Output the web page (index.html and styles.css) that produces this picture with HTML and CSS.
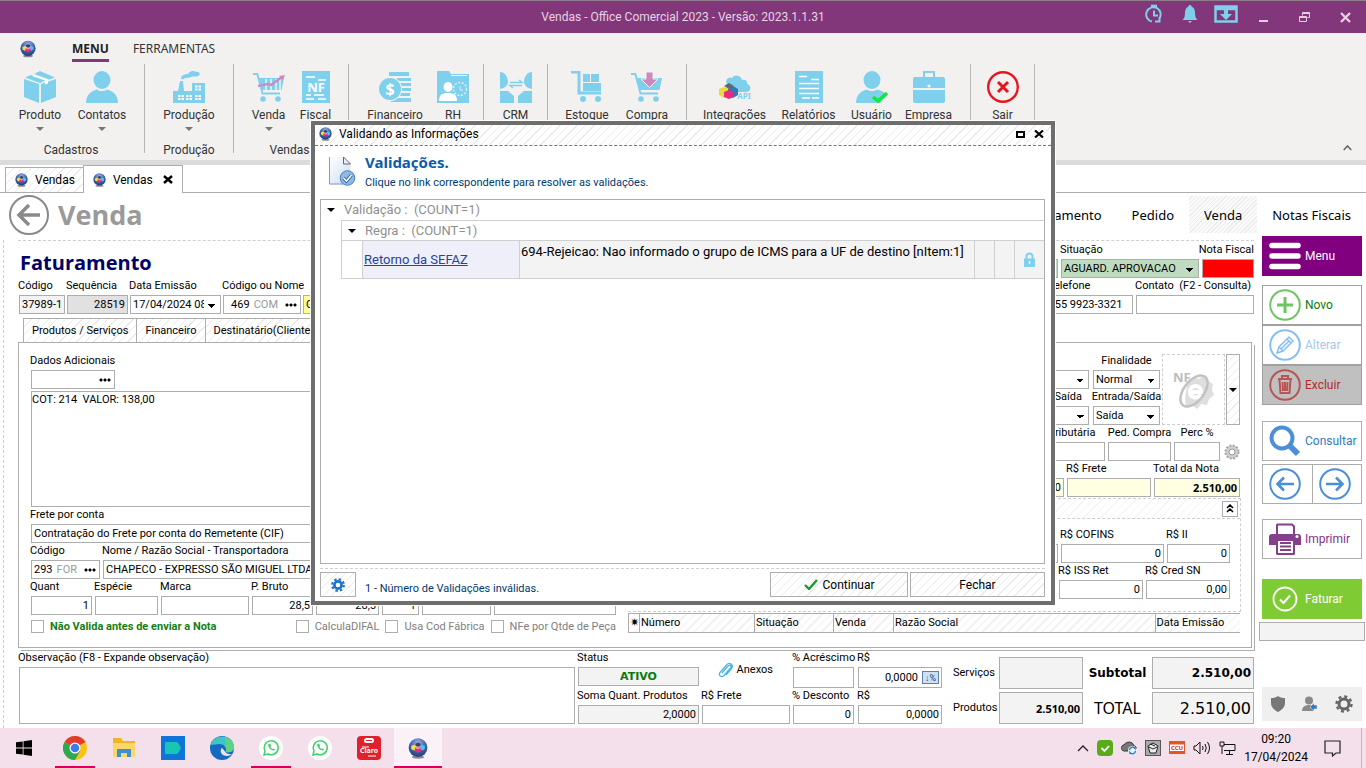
FILE: index.html
```html
<!DOCTYPE html>
<html lang="pt-BR">
<head>
<meta charset="utf-8">
<title>Vendas - Office Comercial 2023</title>
<link rel="stylesheet" href="styles.css">
</head>
<body>
<svg class="defs" aria-hidden="true">
  <defs>
    <radialGradient id="ball" cx="50%" cy="25%" r="75%"><stop offset="0" stop-color="#9db2dc"/><stop offset=".5" stop-color="#4668b0"/><stop offset="1" stop-color="#1f3f7c"/></radialGradient>
    <linearGradient id="sheet" x1="0" y1="0" x2="1" y2="1"><stop offset="0" stop-color="#fff"/><stop offset="1" stop-color="#ccdcf2"/></linearGradient>
    <symbol id="logo" viewBox="0 0 16 17"><ellipse cx="8" cy="15.500" rx="5" ry="1.300" fill="#8a8a8a"/><circle cx="8" cy="7.800" r="7.600" fill="url(#ball)"/><path d="M2.500 6.500 5 5.500 7 6.500v2.500L5 10.200 2.500 9z" fill="#f3e23c"/><path d="M9 6.500l2-1 2.500 1v2.500L11.500 10.200 9.500 9z" fill="#4fc3ea"/><path d="M6 4.600 8 3.700l2 .9v1.400L8 7 6 6z" fill="#39406a"/><path d="M5.500 8 8 6.900 10.500 8v2.800L8 12 5.500 10.800z" fill="#e8297f"/><path d="M5.500 8 8 6.900 10.500 8 8 9.200z" fill="#ff8fc0"/></symbol>
    <symbol id="cart" viewBox="0 0 32 32"><path d="M0 2h5l1.500 5H31l-2.500 12H9.500l.8 2.500H27v2H8.800L3.600 4H0z"/><circle cx="10" cy="28" r="2.800"/><circle cx="25" cy="28" r="2.800"/></symbol>
  </defs>
</svg>

<div class="app">
  <header class="titlebar">
    <h1 class="titlebar-text">Vendas - Office Comercial 2023 - Versão: 2023.1.1.31</h1>
    <div class="titlebar-tools">
      <button class="tool" aria-label="Histórico"><svg width="18" height="20" viewBox="0 0 18 20" fill="none" stroke="#7fd0ec" stroke-width="2"><path d="M7 17.500a7.200 7.200 0 1 1 7-2.500M10 17.500h4.500V13M9 6.500v5h4"/><path d="M6 2.200h6" stroke-width="3"/></svg></button>
      <button class="tool" aria-label="Notificações"><svg width="16" height="20" viewBox="0 0 16 20" fill="#7fd0ec"><path d="M8 1c1 0 1.500.6 1.500 1.500C12 3.500 13 6 13 9c0 4 1 5.500 2.500 7H.5C2 14.500 3 13 3 9c0-3 1-5.500 3.500-6.500C6.500 1.600 7 1 8 1zM6 17h4l-2 2z"/></svg></button>
      <button class="tool" aria-label="Baixar"><svg width="24" height="18" viewBox="0 0 24 18"><path d="M1.500 1.500h21v15h-21zM1 4h22" fill="none" stroke="#7fd0ec" stroke-width="2.500"/><path d="M10 4h4v5h4l-6 6-6-6h4z" fill="#7fd0ec"/></svg></button>
    </div>
    <div class="titlebar-window">
      <button class="winbtn" aria-label="Minimizar"><svg width="11" height="11" viewBox="0 0 11 11"><path d="M1 9h9" stroke="#e3cfe2" stroke-width="2"/></svg></button>
      <button class="winbtn" aria-label="Restaurar"><svg width="11" height="11" viewBox="0 0 11 11" fill="none" stroke="#e3cfe2"><path d="M3.500 3.500v-3h7v5h-2M.5 4.500h7v5h-7zM3.500 1.500h7M.5 5.500h7"/></svg></button>
      <button class="winbtn" aria-label="Fechar janela"><svg width="11" height="11" viewBox="0 0 11 11"><path d="M1 1l9 9M10 1l-9 9" stroke="#e3cfe2" stroke-width="2.400"/></svg></button>
    </div>
  </header>

  <section class="ribbon">
    <nav class="ribbon-menu">
      <svg width="16" height="18"><use href="#logo"/></svg>
      <a class="ribbon-link active" href="#menu">MENU</a>
      <a class="ribbon-link" href="#ferramentas">FERRAMENTAS</a>
    </nav>
    <div class="ribbon-groups">
      <div class="group g-cad">
        <div class="items">
          <button class="item w62 drop"><svg width="32" height="32" viewBox="0 0 32 32" fill="#7fd0ec"><path d="M0 8l15 5v19L0 26zM17 13l15-5v18l-15 6zM1 6.500l6-2.500 15 5-6 3zM10 3l6-3 15 6.500-6 2z"/><path d="M8 5l13 4.500v4l3-1V8.500L11 4z" fill="#fff"/></svg>Produto</button>
          <button class="item w62 drop"><svg width="32" height="32" viewBox="0 0 32 32" fill="#7fd0ec"><ellipse cx="16" cy="9" rx="8.500" ry="9"/><path d="M0 32c0-8 5-12 11-13.500 3 2 7 2 10 0C27 20 32 24 32 32z"/></svg>Contatos</button>
        </div>
        <span class="caption">Cadastros</span>
      </div>
      <div class="group g-prod">
        <div class="items"><button class="item w62 drop"><svg width="32" height="32" viewBox="0 0 32 32" fill="#7fd0ec"><path d="M0 20h5l2-10h3l1 10h8v-8h13v20H0zM8 8c0-4 4-5 7-5 2-3 5-4 8-2 3-1 5 2 3 3.500-3 2-5 0-8 1.500s-6 0-8 2.500z"/><path d="M5 24h6v5H5zM13 24h6v5h-6zM22 24h6v5h-6zM22 14.500h6v5h-6z" fill="#fff"/><path d="M5 26.500h23M8 24v5M16 24v5M25 14v15M22 17h6" stroke="#7fd0ec"/></svg>Produção</button></div>
        <span class="caption">Produção</span>
      </div>
      <div class="group g-vend">
        <div class="items">
          <button class="item w52 drop"><svg width="32" height="32" viewBox="0 0 32 32"><use href="#cart" fill="#7fd0ec"/><path d="M13 8v11M18 8v11M23 8v11M27 8v11" stroke="#f2f1f0" stroke-width="1.500"/><path d="M5 15l10-2 3 1 11-8" fill="none" stroke="#cf86c4" stroke-width="2.200"/><path d="M26 5l6-1-2 5z" fill="#cf86c4"/></svg>Venda</button>
          <button class="item w42"><svg width="28" height="32" viewBox="0 0 28 32"><path d="M0 0h28v32H0z" fill="#7fd0ec"/><path d="M4 6h9M16 9h8M4 24h5M12 24h10M4 28h8M16 28h8" stroke="#fff" stroke-width="1.500"/><text x="14" y="21" class="nf-mark">NF</text></svg>Fiscal</button>
        </div>
        <span class="caption">Vendas</span>
      </div>
      <div class="group g-fin">
        <div class="items">
          <button class="item w74"><svg width="32" height="32" viewBox="0 0 32 32" fill="#7fd0ec"><path d="M10 1h20v4H10zM18 7h14v3H18zM21 12h11v3H21zM22 17h10v3H22zM20 22h11v3H20zM12 27h20v4H12z"/><circle cx="11" cy="18" r="12" fill="#f2f1f0"/><circle cx="11" cy="18" r="11"/><text x="11" y="24" class="coin-mark">$</text></svg>Financeiro</button>
          <button class="item w42"><svg width="32" height="32" viewBox="0 0 32 32"><path d="M0 0h12l2 3h18v29H0z" fill="#7fd0ec"/><path d="M14 4.500h16" stroke="#fff"/><ellipse cx="11" cy="16" rx="4.500" ry="5" fill="#fff"/><path d="M2 30c0-6 3-8 9-8s9 2 9 8z" fill="#fff"/><circle cx="23" cy="18" r="6.500" fill="none" stroke="#d8f0f8" stroke-width="1.500" stroke-dasharray="2 1.500"/><path d="M23 15v4h3" fill="none" stroke="#d8f0f8"/></svg>RH</button>
        </div>
      </div>
      <div class="group g-crm">
        <div class="items"><button class="item w52"><svg width="32" height="32" viewBox="0 0 32 32" fill="#7fd0ec"><path d="M0 1c5 0 8 5 8 10-1 5-4 6-8 7zM32 1c-5 0-8 5-8 10 1 5 4 6 8 7zM0 20h8l6 5v7H0zM32 20h-8l-6 5v7h14z"/><path d="M10 11.500h12l-3-2.500M22 14.500H10l3 2.500" fill="none" stroke="#7fd0ec" stroke-width="1.500"/></svg>CRM</button></div>
      </div>
      <div class="group g-est">
        <div class="items">
          <button class="item w60"><svg width="32" height="32" viewBox="0 0 32 32"><path d="M0 1h8v21h22" fill="none" stroke="#7fd0ec" stroke-width="3"/><path d="M12 3h7v8h-7zM20 3h8v8h-8zM12 12h18v8H12z" fill="#7fd0ec"/><circle cx="12" cy="28" r="3" fill="#7fd0ec"/><circle cx="27" cy="28" r="3" fill="#7fd0ec"/></svg>Estoque</button>
          <button class="item w60"><svg width="32" height="32" viewBox="0 0 32 32"><use href="#cart" fill="#7fd0ec"/><path d="M15 1h7v7h5l-8.500 8.500L10 8h5z" fill="#cf86c4" stroke="#f2f1f0"/></svg>Compra</button>
        </div>
      </div>
      <div class="group g-ger">
        <div class="items">
          <button class="item w74"><svg width="32" height="32" viewBox="0 0 32 32"><path d="M8 13C5 9 10 5 13 7c2-4 9-3 10 2 4-1 6 2 5 4 5 1 4 8 0 8H14z" fill="#7fd0ec"/><path d="M0 18l5-2 5 2v6l-5 3-5-3z" fill="#ecd93b"/><path d="M9 18l5-3 5 3v6l-5 3-5-3z" fill="#2d78b8"/><path d="M5 15l5-3 5 3-5 3z" fill="#66656f"/><path d="M5 21l5-2 4.500 2v5L10 28l-5-2z" fill="#e8297f"/><text x="25" y="28" class="api-mark">API</text></svg>Integrações</button>
          <button class="item w74"><svg width="28" height="32" viewBox="0 0 28 32"><path d="M0 0h28v32H0z" fill="#7fd0ec"/><path d="M4 5.500h8M16 8.500h8M4 12.500h20M4 17.500h20M4 22.500h20M7 27h8M17 27h7" stroke="#fff" stroke-width="1.500"/></svg>Relatórios</button>
          <button class="item w52"><svg width="32" height="32" viewBox="0 0 32 32" fill="#7fd0ec"><ellipse cx="16" cy="9" rx="8.500" ry="9"/><path d="M0 32c0-8 5-12 11-13.500 3 2 7 2 10 0 5 1 8 3 10 6L24 32z"/><path d="M17 26l5 4 9-8" fill="none" stroke="#12e83a" stroke-width="3.500"/></svg>Usuário</button>
          <button class="item w62"><svg width="32" height="32" viewBox="0 0 32 32" fill="#7fd0ec"><path d="M10 6V0h12v6h8q2 0 2 2v9H0V8q0-2 2-2zM12 2v4h8V2z" fill-rule="evenodd"/><path d="M0 19h32v11q0 2-2 2H2q-2 0-2-2z"/><circle cx="16" cy="15" r="1.500" fill="#fff"/></svg>Empresa</button>
        </div>
      </div>
      <div class="group g-sair">
        <div class="items"><button class="item w52"><svg width="32" height="32" viewBox="0 0 32 32" fill="none" stroke="#e8141c"><circle cx="16" cy="16" r="14.800" stroke-width="2.400"/><path d="M11 11l10 10M21 11L11 21" stroke-width="3"/></svg>Sair</button></div>
      </div>
      <button class="collapse" aria-label="Recolher faixa"><svg width="9" height="6" viewBox="0 0 9 6"><path d="M.7 5l3.800-4 3.800 4" fill="none" stroke="#666" stroke-width="1.600"/></svg></button>
    </div>
  </section>

  <nav class="doctabs">
    <a class="doctab hatch" href="#v1"><svg width="13" height="14"><use href="#logo"/></svg>Vendas</a>
    <a class="doctab current" href="#v2"><svg width="13" height="14"><use href="#logo"/></svg>Vendas
      <svg width="10" height="9" viewBox="0 0 10 9"><path d="M1 1l8 7M9 1L1 8" stroke="#000" stroke-width="2.400"/></svg></a>
  </nav>

  <div class="pagehead">
    <button class="back" aria-label="Voltar"><svg width="40" height="40" viewBox="0 0 40 40" fill="none" stroke="#8a8a8a"><circle cx="20" cy="20" r="19" stroke-width="2"/><path d="M31 20H10M20 10L10 20l10 10" stroke-width="3.500"/></svg></button>
    <h2 class="pagetitle">Venda</h2>
    <nav class="stages">
      <a href="#orcamento" class="stage">Orçamento</a>
      <a href="#pedido" class="stage">Pedido</a>
      <a href="#venda" class="stage on">Venda</a>
      <a href="#notas" class="stage">Notas Fiscais</a>
    </nav>
  </div>

  <div class="workspace">
    <main class="main">
      <form class="form">
        <div class="headrow">
          <h3 class="formtitle">Faturamento</h3>
          <div class="row">
            <div class="field w84"><label for="vend">Vendedor</label><input id="vend" class="inp green"></div>
            <div class="field w138"><label for="sit">Situação</label><select id="sit" class="inp sel green"><option>AGUARD. APROVACAO</option></select></div>
            <div class="field w52f end"><label for="nfs">Nota Fiscal</label><input id="nfs" class="inp red"></div>
          </div>
        </div>
        <div class="headrow">
          <div class="row tight">
            <div class="field w46"><label for="cod">Código</label><input id="cod" class="inp gray" value="37989-1"></div>
            <div class="field w60f"><label for="seq">Sequência</label><input id="seq" class="inp dark num" value="28519"></div>
            <div class="field w91"><label for="emi">Data Emissão</label><select id="emi" class="inp sel"><option>17/04/2024 08</option></select></div>
            <div class="field w78"><label for="cli">Código ou Nome</label><div class="inp combo"><input id="cli" class="bare num" value="469"><span class="hint">COM</span><button type="button" class="dots" aria-label="Buscar cliente"></button></div></div>
            <div class="field w138 end"><label for="nome">Nome</label><input id="nome" class="inp yellow" value="G"></div>
          </div>
          <div class="row">
            <div class="field w84"><label for="tel">Telefone</label><input id="tel" class="inp" value=" 55 9923-3321"></div>
            <div class="field w118"><label for="cont">Contato &nbsp;(F2 - Consulta)</label><input id="cont" class="inp"></div>
          </div>
        </div>

        <div class="formtabs">
          <button type="button" class="formtab hatch">Produtos / Serviços</button>
          <button type="button" class="formtab hatch">Financeiro</button>
          <button type="button" class="formtab hatch">Destinatário(Cliente)</button>
        </div>

        <div class="panel">
          <div class="left">
            <div class="field w84"><label for="dad">Dados Adicionais</label><div class="inp combo"><input id="dad" class="bare num"><button type="button" class="dots" aria-label="Buscar dados"></button></div></div>
            <textarea class="inp memo" aria-label="Texto adicional">COT: 214  VALOR: 138,00</textarea>
            <div class="field"><label for="fre">Frete por conta</label><input id="fre" class="inp" value="Contratação do Frete por conta do Remetente (CIF)"></div>
            <div class="row">
              <div class="field w69"><label for="tco">Código</label><div class="inp combo"><input id="tco" class="bare" value="293"><span class="hint">FOR</span><button type="button" class="dots" aria-label="Buscar transportadora"></button></div></div>
              <div class="field grow"><label for="tno">Nome / Razão Social - Transportadora</label><input id="tno" class="inp" value="CHAPECO - EXPRESSO SÃO MIGUEL LTDA"></div>
            </div>
            <div class="row">
              <div class="field w60f"><label for="qt">Quant</label><input id="qt" class="inp num" value="1"></div>
              <div class="field w63"><label for="es">Espécie</label><input id="es" class="inp"></div>
              <div class="field w88"><label for="ma">Marca</label><input id="ma" class="inp"></div>
              <div class="field w60f"><label for="pb">P. Bruto</label><input id="pb" class="inp num" value="28,5"></div>
              <div class="field low w63"><input aria-label="Peso líquido" class="inp num" value="28,5"></div>
              <div class="field low w36"><input aria-label="Volumes" class="inp num" value="1"></div>
              <div class="field low w69"><input aria-label="Placa" class="inp"></div>
              <div class="field low grow"><input aria-label="Complemento" class="inp"></div>
            </div>
            <div class="checks">
              <label class="check strong"><input type="checkbox">Não Valida antes de enviar a Nota</label>
              <label class="check"><input type="checkbox">CalculaDIFAL</label>
              <label class="check"><input type="checkbox">Usa Cod Fábrica</label>
              <label class="check"><input type="checkbox">NFe por Qtde de Peça</label>
            </div>
          </div>

          <div class="right">
            <div class="nferow">
              <div>
                <div class="row gap4">
                  <div class="field low w69"><select aria-label="Modelo" class="inp sel"><option></option></select></div>
                  <div class="field w67 mid"><label for="fin">Finalidade</label><select id="fin" class="inp sel"><option>Normal</option></select></div>
                </div>
                <div class="row gap4">
                  <div class="field w69 mid"><label for="dsa">Data/Saída</label><select id="dsa" class="inp sel"><option></option></select></div>
                  <div class="field w67 mid"><label for="ens">Entrada/Saída</label><select id="ens" class="inp sel"><option>Saída</option></select></div>
                </div>
              </div>
              <button type="button" class="nfebox" aria-label="Nota fiscal eletrônica"><svg width="42" height="42" viewBox="0 0 42 42"><path d="M15 11l5-3 5 2 6-3 4 5 5 3-1 6 2 5-5 4-2 6-6-1-4 5-5-4-6 1-1-6 1-8z" fill="#dedede"/><path d="M17 23h11c0-8-11-8-11 0 0 6 7 7 11 3" fill="none" stroke="#fff" stroke-width="4"/><ellipse cx="21" cy="22" rx="10" ry="18" fill="none" stroke="#c2c2c2" stroke-width="2.500" transform="rotate(38 21 22)"/><text x="0" y="13" class="nfe-mark">NF</text></svg></button>
              <button type="button" class="strip hatch" aria-label="Opções NFe"></button>
            </div>
            <div class="row">
              <div class="field w84 mid"><label for="tri">Sit. Tributária</label><input id="tri" class="inp"></div>
              <div class="field w63 mid"><label for="ped">Ped. Compra</label><input id="ped" class="inp"></div>
              <div class="field w46 mid"><label for="per">Perc %</label><input id="per" class="inp"></div>
              <button type="button" class="gearbtn" aria-label="Configurar"><svg width="16" height="16" viewBox="0 0 16 16"><circle cx="8" cy="8" r="6.500" fill="#c9c9c9" stroke="#a2a2a2" stroke-width="2" stroke-dasharray="2 1.400"/><circle cx="8" cy="8" r="5.500" fill="#d0d0d0"/><circle cx="8" cy="8" r="3" fill="#fff" stroke="#999"/></svg></button>
            </div>
            <div class="row">
              <div class="field w60f"><label for="out">Outros</label><input id="out" class="inp cream num" value="0"></div>
              <div class="field w84"><label for="rfr">R$ Frete</label><input id="rfr" class="inp cream"></div>
              <div class="field w86"><label for="tot">Total da Nota</label><input id="tot" class="inp cream num bold" value="2.510,00"></div>
            </div>
            <div class="taxes">
              <div class="taxbar"><button type="button" class="upbtn" aria-label="Recolher impostos"><svg width="8" height="9" viewBox="0 0 8 9" fill="none" stroke="#000" stroke-width="1.500"><path d="M1 4l3-3 3 3M1 8l3-3 3 3"/></svg></button></div>
              <div class="row">
                <div class="field w60f"><label for="pis">R$ PIS</label><input id="pis" class="inp num" value="0"></div>
                <div class="field w103"><label for="cof">R$ COFINS</label><input id="cof" class="inp num" value="0"></div>
                <div class="field w63"><label for="rii">R$ II</label><input id="rii" class="inp num" value="0"></div>
              </div>
              <div class="row">
                <div class="field w60f"><label for="iss">R$ ISS</label><input id="iss" class="inp num" value="0"></div>
                <div class="field w84"><label for="isr">R$ ISS Ret</label><input id="isr" class="inp num" value="0"></div>
                <div class="field w84"><label for="csn">R$ Cred SN</label><input id="csn" class="inp num" value="0,00"></div>
              </div>
            </div>
            <table class="notas hatch">
              <colgroup><col class="c12"><col class="c115"><col class="c79"><col class="c60"><col><col class="c85"></colgroup>
              <thead><tr><th>✷</th><th>Número</th><th>Situação</th><th>Venda</th><th>Razão Social</th><th>Data Emissão</th></tr></thead>
            </table>
          </div>
        </div>

        <div class="bottom">
          <div class="field obs"><label for="obs">Observação (F8 - Expande observação)</label><textarea id="obs" class="inp"></textarea></div>
          <div class="stack">
            <div class="row spread">
              <div class="field w121"><label for="sta">Status</label><input id="sta" class="inp gray status" value="ATIVO"></div>
              <button type="button" class="anexos"><svg width="15" height="16" viewBox="0 0 15 16" fill="none" stroke="#4db4e6" stroke-width="1.300"><path d="M4 11l6-7c2-2 4 0 2.500 2L6 13.500C3.500 16 0 13.500 2 10.500L8.500 3c3-3.500 7.500 0 5 3.500L8 13"/></svg>Anexos</button>
            </div>
            <div class="row">
              <div class="field w121"><label for="som">Soma Quant. Produtos</label><input id="som" class="inp gray num" value="2,0000"></div>
              <div class="field w88"><label for="fr2">R$ Frete</label><input id="fr2" class="inp"></div>
            </div>
          </div>
          <div class="stack">
            <div class="row gap4">
              <div class="field w60f"><label for="acr">% Acréscimo</label><input id="acr" class="inp tall"></div>
              <div class="field w84"><label for="acv">R$</label><div class="inp tall combo"><input id="acv" class="bare num" value="0,0000"><button type="button" class="pct" aria-label="Alternar percentual">↓%</button></div></div>
            </div>
            <div class="row gap4">
              <div class="field w60f"><label for="des">% Desconto</label><input id="des" class="inp num" value="0"></div>
              <div class="field w84"><label for="dev">R$</label><input id="dev" class="inp num" value="0,0000"></div>
            </div>
          </div>
          <div class="totals">
            <label for="ser">Serviços</label><input id="ser" class="inp gray">
            <label for="sub" class="subt">Subtotal</label><input id="sub" class="inp gray num subv" value="2.510,00">
            <label for="prd">Produtos</label><input id="prd" class="inp gray num bold" value="2.510,00">
            <label for="ttl" class="ttl">TOTAL</label><input id="ttl" class="inp gray num big" value="2.510,00">
          </div>
        </div>
      </form>
    </main>

    <aside class="side">
      <button class="sbtn menu"><svg width="32" height="28" viewBox="0 0 32 28" stroke="#fff" stroke-width="5.500" stroke-linecap="round"><path d="M3 3.500h26M3 14h26M3 24.500h26"/></svg>Menu</button>
      <div class="sgroup">
        <button class="sbtn novo"><svg width="32" height="32" viewBox="0 0 32 32" fill="none" stroke="#6cc562"><circle cx="16" cy="16" r="14.800" stroke-width="2"/><path d="M16 8v16M8 16h16" stroke-width="3"/></svg>Novo</button>
        <button class="sbtn alt"><svg width="32" height="32" viewBox="0 0 32 32" fill="none" stroke="#86bdf2" stroke-width="1.500"><circle cx="16" cy="16" r="14.800" stroke-width="2"/><path d="M8 24l2-6L20 8l4 4-10 10zM18 10l4 4M10 18l4 4M12 20l8-8"/></svg>Alterar</button>
        <button class="sbtn exc"><svg width="32" height="32" viewBox="0 0 32 32" fill="none" stroke="#b85454" stroke-width="2"><circle cx="16" cy="16" r="14.800"/><path d="M9 10h14M13 9V7h6v2M10.500 11l1 13h9l1-13M13.500 13l.5 9M16 13v9M18.500 13l-.5 9"/></svg>Excluir</button>
      </div>
      <div class="sgroup2">
        <button class="sbtn cons"><svg width="32" height="32" viewBox="0 0 32 32" fill="none" stroke="#4a8fd8"><circle cx="13" cy="13" r="10.500" stroke-width="4"/><path d="M21 21l8 8" stroke-width="6"/></svg>Consultar</button>
        <div class="pair">
          <button aria-label="Anterior"><svg width="32" height="32" viewBox="0 0 32 32" fill="none" stroke="#4a8fd8" stroke-width="2"><circle cx="16" cy="16" r="14.800"/><path d="M25 16H9M15 9.500L8.500 16l6.500 6.500" stroke-width="2.600"/></svg></button>
          <button aria-label="Próximo"><svg width="32" height="32" viewBox="0 0 32 32" fill="none" stroke="#4a8fd8" stroke-width="2"><circle cx="16" cy="16" r="14.800"/><path d="M7 16h16M17 9.500l6.500 6.500-6.500 6.500" stroke-width="2.600"/></svg></button>
        </div>
      </div>
      <button class="sbtn impr"><svg width="32" height="32" viewBox="0 0 32 32" fill="#84408a"><path d="M7 11V2q0-1.500 1.500-1.500h15L26 3v8h3q3 0 3 3v8H26v8.500q0 1.500-1.500 1.500h-16Q7 32 7 30.500V22H0v-8q0-3 3-3zM9 2.500V11h15V4l-1.500-1.500zM9 18v12h15V18z" fill-rule="evenodd"/><path d="M11 20h11M11 23.500h11M11 27h11" stroke="#84408a" stroke-width="1.800"/><circle cx="28" cy="13.500" r="1.500" fill="#fff"/></svg>Imprimir</button>
      <button class="sbtn fat"><svg width="26" height="26" viewBox="0 0 26 26" fill="none" stroke="#fff"><circle cx="13" cy="13" r="11.500" stroke-width="1.800"/><path d="M8 13.500l3.500 3.500L18 9.500" stroke-width="2"/></svg>Faturar</button>
      <input class="inp gray sideinp" aria-label="Mensagem">
      <div class="sidetools">
        <button aria-label="Segurança"><svg width="14" height="16" viewBox="0 0 14 16"><path d="M7 0c2 1.500 4 2 7 2v5c0 4-3 7-7 9-4-2-7-5-7-9V2c3 0 5-.5 7-2z" fill="#777"/></svg></button>
        <button aria-label="Trocar usuário"><svg width="16" height="16" viewBox="0 0 16 16"><circle cx="7" cy="4.500" r="4" fill="#8a8a8a"/><path d="M0 15c0-4 3-6 7-6s5 2 5 6z" fill="#8a8a8a"/><path d="M15 9v4H12v2l-4-4 4-4v2z" fill="#2f7bc8" stroke="#efefef" stroke-width=".5"/></svg></button>
        <button aria-label="Configurações"><svg width="18" height="18" viewBox="0 0 18 18" fill="none" stroke="#666"><circle cx="9" cy="9" r="5" stroke-width="3"/><circle cx="9" cy="9" r="7.500" stroke-width="2.400" stroke-dasharray="3 2.890"/></svg></button>
      </div>
    </aside>
  </div>

  <footer class="taskbar">
    <button class="start" aria-label="Iniciar"><svg width="16" height="16" viewBox="0 0 16 16"><path d="M0 2.300l6.700-.9v6.200H0zM7.500 1.300L16 0v7.600H7.500zM0 8.400h6.700v6.200L0 13.700zM7.500 8.400H16V16l-8.500-1.300z"/></svg></button>
    <button class="task run" aria-label="Chrome"><svg width="24" height="24" viewBox="0 0 24 24"><circle cx="12" cy="12" r="12" fill="#fbc116"/><path d="M12 12L1.600 6A12 12 0 0 1 22.400 6z" fill="#e33b2e"/><path d="M12 12L1.600 6A12 12 0 0 0 12 24l5.200-9z" fill="#2da94f"/><circle cx="12" cy="12" r="5.500" fill="#fff"/><circle cx="12" cy="12" r="4.300" fill="#3b7ded"/></svg></button>
    <button class="task" aria-label="Arquivos"><svg width="22" height="20" viewBox="0 0 22 20"><path d="M0 0h8l2 3h12v16H0z" fill="#f0b429"/><path d="M0 5h22v14H0z" fill="#fcd667"/><path d="M4 19v-8h14v8h-4v-4H8v4z" fill="#3f8fd2"/></svg></button>
    <button class="task" aria-label="Aplicativo D"><svg width="24" height="24" viewBox="0 0 24 24"><path d="M0 0h24v24H0z" fill="#0f74d8"/><path d="M5 6h10q1.500 0 2.300 1.200L20 12l-2.700 4.800Q16.500 18 15 18H5q-1 0-1-1V7q0-1 1-1z" fill="#17c6b4"/></svg></button>
    <button class="task" aria-label="Edge"><svg width="24" height="24" viewBox="0 0 24 24"><circle cx="12" cy="12" r="12" fill="#1469c0"/><path d="M1 8C4-2 22-3 24 11c0 5-5 6-8.500 5 2-3-1-8-6-8C5 8 1 10 1 8z" fill="#3dc6c4"/><path d="M15 1c6 2 9 6 9 10s-4 6-8.500 5c1-1.500.8-3 .5-4z" fill="#5fd383"/><path d="M12 12c-2 1-2 6 2 7.500 3 1 6 .5 8-1.500-3 .5-6.500-.5-6.500-2z" fill="#f4e2ec"/></svg></button>
    <button class="task run" aria-label="WhatsApp"><svg width="24" height="24" viewBox="0 0 24 24"><circle cx="12" cy="12" r="12" fill="#fff"/><path d="M5 19l1-4a7 7 0 1 1 3 3z" fill="none" stroke="#3fcf6c" stroke-width="1.500"/><path d="M9.500 8c-1.500 2 2.500 7 5.500 6.500 1.500-.5 1-1.500 0-2l-1.500.5c-1-.5-2-1.500-2-2.500l.5-1c-.5-1.500-1.500-2.200-2.500-1.500z" fill="#3fcf6c"/></svg></button>
    <button class="task" aria-label="WhatsApp 2"><svg width="24" height="24" viewBox="0 0 24 24"><circle cx="12" cy="12" r="12" fill="#fff"/><path d="M5 19l1-4a7 7 0 1 1 3 3z" fill="none" stroke="#3fcf6c" stroke-width="1.500"/><path d="M9.500 8c-1.500 2 2.500 7 5.500 6.500 1.500-.5 1-1.500 0-2l-1.500.5c-1-.5-2-1.500-2-2.500l.5-1c-.5-1.500-1.500-2.200-2.500-1.500z" fill="#3fcf6c"/></svg></button>
    <button class="task" aria-label="Claro"><svg width="24" height="24" viewBox="0 0 24 24"><rect width="24" height="24" rx="4" fill="#e0212b"/><rect x="7" y="2" width="10" height="5" rx="2.500" fill="#fff"/><path d="M9 4.500h6" stroke="#e0212b"/><text x="12" y="17" class="claro-mark">Claro</text><path d="M5 11h7M11 20h8" stroke="#fff"/></svg></button>
    <button class="task run open" aria-label="Office Comercial"><svg width="20" height="21"><use href="#logo"/></svg></button>
    <div class="tray">
      <svg width="12" height="7" viewBox="0 0 12 7"><path d="M1 6l5-5 5 5" fill="none" stroke="#222" stroke-width="1.300"/></svg>
      <svg width="16" height="16" viewBox="0 0 16 16"><rect width="16" height="16" rx="4" fill="#5aab19"/><path d="M4.500 8l3 3 4.500-5" fill="none" stroke="#fff" stroke-width="1.800"/></svg>
      <svg width="16" height="16" viewBox="0 0 16 16"><path d="M3 11C-1 10 0 5 3 5c2-4 9-4 10 1 2 0 3 2 2 3l-3 2z" fill="#777" stroke="#333"/><circle cx="11.500" cy="10.500" r="4.500" fill="#e8f2fb"/><path d="M8.500 10a3 3 0 0 1 5.500-1.500V7M14.500 11a3 3 0 0 1-5.500 1.500V14" fill="none" stroke="#1b6fc4" stroke-width="1.300"/></svg>
      <svg width="16" height="16" viewBox="0 0 16 16"><rect x=".5" y=".5" width="15" height="15" fill="#aaa" stroke="#555"/><path d="M3 6l5-3 5 3-2 7H5z" fill="#eee" stroke="#222"/><path d="M4 7l4 2 4-2M5 4l5 2" stroke="#222" fill="none"/></svg>
      <svg width="16" height="16" viewBox="0 0 16 16"><path d="M0 1h16v13H0z" fill="#e2571b"/><path d="M1 4.500h14v6.500H1z" fill="#fff"/><text x="8" y="10" class="cc-mark">CCU</text></svg>
      <svg width="18" height="14" viewBox="0 0 18 14" fill="none" stroke="#111"><path d="M1 5h2l4-4v12L3 9H1zM9.500 5q1.200 2 0 4M12 3q2.500 4 0 8M14.500 1q4 6 0 12"/></svg>
      <svg width="17" height="14" viewBox="0 0 17 14" fill="none" stroke="#111"><path d="M5 3.500h11v6H5M10.500 10v3M7 13.500h7M1 1h4v4H1zM3 5v8"/></svg>
      <time class="clock">09:20<br>17/04/2024</time>
      <svg width="17" height="17" viewBox="0 0 17 17" fill="none" stroke="#222"><path d="M1 1h15v12h-4l-3.500 3v-3H1z" stroke-width="1.200"/></svg>
      <span class="peek"></span>
    </div>
  </footer>
</div>

<div class="dialog" role="dialog" aria-labelledby="dlgtitle">
  <div class="dlg-bar hatch">
    <svg width="13" height="14"><use href="#logo"/></svg><span id="dlgtitle">Validando as Informações</span>
    <button aria-label="Maximizar"><svg width="9" height="7" viewBox="0 0 9 7"><path d="M1 1h7v5H1z" fill="none" stroke="#000" stroke-width="2"/></svg></button>
    <button aria-label="Fechar diálogo"><svg width="10" height="8" viewBox="0 0 10 8"><path d="M1 .5l8 7M9 .5l-8 7" stroke="#000" stroke-width="2.200"/></svg></button>
  </div>
  <div class="dlg-head">
    <svg width="27" height="30" viewBox="0 0 27 30"><path d="M.5 28.500V1h14l7 7v20.500z" fill="url(#sheet)"/><path d="M.5 1v27h14" fill="none" stroke="#8b98bd"/><path d="M14.500 1v7h7z" fill="#e9effa" stroke="#667"/><circle cx="18.500" cy="22" r="7.300" fill="#8fb9e4" stroke="#4c82bd"/><path d="M14.500 22l3 3 5-6" fill="none" stroke="#29609f" stroke-width="3.400"/><path d="M14.500 22l3 3 5-6" fill="none" stroke="#fff" stroke-width="1.600"/></svg>
    <div><h2 class="dlg-title">Validações.</h2><p class="dlg-sub">Clique no link correspondente para resolver as validações.</p></div>
  </div>
  <div class="tree">
    <div class="tree-group"><i class="tri"></i>Validação : &nbsp;(COUNT=1)</div>
    <div class="tree-sub">
      <div class="tree-group inner"><i class="tri"></i>Regra : &nbsp;(COUNT=1)</div>
      <table class="tree-table"><colgroup><col class="c157"><col><col class="c20"><col class="c20"><col class="c30"></colgroup>
        <tbody><tr><td class="lnk"><a href="#sefaz">Retorno da SEFAZ</a></td><td class="msg">694-Rejeicao: Nao informado o grupo de ICMS para a UF de destino [nItem:1]</td><td></td><td></td><td class="lock"><svg width="11" height="15" viewBox="0 0 11 15"><path d="M2.500 7V4.500a3 3 0 0 1 6 0V7" fill="none" stroke="#7fd0ec" stroke-width="2"/><path d="M0 6.500h11V15H0z" fill="#7fd0ec"/><path d="M5.500 9v3" stroke="#fff" stroke-width="1.500"/></svg></td></tr></tbody>
      </table>
    </div>
  </div>
  <div class="dlg-foot">
    <button class="dbtn gear hatch" aria-label="Configurar validações"><svg width="14" height="14" viewBox="0 0 14 14" fill="none" stroke="#1d74d0"><circle cx="7" cy="7" r="3.600" stroke-width="2.600"/><circle cx="7" cy="7" r="5.800" stroke-width="2.200" stroke-dasharray="2.400 2.150"/></svg></button>
    <span class="dlg-count">1 - Número de Validações inválidas.</span>
    <button class="dbtn wide1 hatch"><svg width="14" height="11" viewBox="0 0 14 11"><path d="M1 6l4 4 8-9" fill="none" stroke="#189a2c" stroke-width="2.400"/></svg>Continuar</button>
    <button class="dbtn wide2 hatch">Fechar</button>
  </div>
</div>
</body>
</html>
```
FILE: styles.css
```css
* { box-sizing: border-box; }
:root { --line: #adadad; --soft: #cfcfcf; --ui: Roboto, "Liberation Sans", sans-serif; --noto: "Noto Sans", "Open Sans", sans-serif; --wide: "DejaVu Sans", "Noto Sans", sans-serif; }
body { margin: 0; background: #fff; color: #000; font: 11px/16px var(--ui); position: relative; overflow-x: hidden; }
button, input, select, textarea { font: inherit; color: inherit; margin: 0; }
button { background: none; border: 0; padding: 0; border-radius: 0; }
a { color: inherit; text-decoration: none; }
h1, h2, h3, p { margin: 0; font-weight: normal; }
svg { flex: none; display: block; }
.defs { position: absolute; width: 0; height: 0; }
.hatch { background-color: #fff; background-image: repeating-linear-gradient(135deg, transparent 0 5px, #ebebeb 5px 6px); }
.app { display: flex; flex-direction: column; min-height: 100vh; }

/* Title bar */
.titlebar { display: grid; grid-template-columns: 1fr auto 1fr; align-items: center; height: 33px; background: #82377a; border-top: 1px solid #8f7a8e; color: #e6d3e5; }
.titlebar-text { grid-column: 2; font-size: 12px; line-height: 16px; }
.titlebar-tools { grid-column: 3; grid-row: 1; justify-self: end; display: flex; align-items: center; height: 26px; margin: 0 122px 6px 0; }
.titlebar-window { grid-row: 1; grid-column: 3; justify-self: end; display: flex; }
.tool { width: 36px; display: flex; justify-content: center; }
.winbtn { width: 41px; display: flex; justify-content: center; }

/* Ribbon */
.ribbon { background: #f2f1f0; border-bottom: 5px solid #dadbdb; color: #333; font-size: 12px; }
.ribbon-menu { display: flex; align-items: center; height: 31px; padding-left: 20px; font-family: var(--noto); }
.ribbon-link { margin-left: 24px; padding-top: 5px; height: 26px; color: #333; }
.ribbon-link.active { margin-left: 36px; font-weight: bold; border-bottom: 3px solid #82377a; color: #222; }
.ribbon-groups { display: flex; height: 96px; padding-bottom: 7px; }
.group { display: flex; flex-direction: column; align-items: center; border-right: 1px solid #b5b5b5; }
.items { display: flex; flex: none; height: 78px; }
.item { display: flex; flex-direction: column; align-items: center; padding-top: 7px; height: 72px; white-space: nowrap; line-height: 24px; }
.drop::after { content: ""; border: 4px solid transparent; border-top-color: #777; border-bottom: 0; }
.caption { line-height: 16px; }
.w42 { width: 42px; } .w52 { width: 52px; } .w60 { width: 60px; } .w62 { width: 62px; } .w74 { width: 74px; }
.g-cad { width: 145px; padding-right: 2px; } .g-prod { width: 89px; } .g-vend { width: 115px; padding-right: 3px; } .g-fin { width: 135px; }
.g-crm { width: 64px; } .g-est { width: 139px; } .g-ger { width: 284px; } .g-sair { width: 64px; }
.collapse { margin: 0 14px 0 auto; align-self: flex-end; padding-bottom: 2px; }
.nf-mark { font: bold 13px "Noto Sans", sans-serif; fill: #fff; text-anchor: middle; }
.coin-mark { font: bold 16px "Noto Sans", sans-serif; fill: #fff; text-anchor: middle; }
.api-mark { font: bold 8px "Noto Sans", sans-serif; fill: #7fd0ec; text-anchor: middle; }
.nfe-mark { font: bold 13px "Noto Sans", sans-serif; fill: #bdbdbd; }
.claro-mark { font: bold 7px "Noto Sans", sans-serif; fill: #fff; text-anchor: middle; }
.cc-mark { font: bold 6px "Noto Sans", sans-serif; fill: #c22; text-anchor: middle; }

/* Document tabs */
.doctabs { display: flex; align-items: flex-end; height: 28px; padding-left: 5px; border-bottom: 1px solid var(--line); font-size: 12px; }
.doctab { display: flex; align-items: center; gap: 7px; height: 25px; padding: 0 8px 0 9px; border: 1px solid var(--line); border-bottom: 0; }
.doctab.current { height: 28px; margin: 0 0 -1px -1px; padding-right: 9px; background: #fff; }
.doctab.current svg:last-child { margin-left: 3px; }

/* Page head */
.pagehead { display: flex; align-items: center; height: 43px; padding-left: 9px; }
.pagetitle { margin-left: 9px; font: bold 27px/40px "Open Sans", "Noto Sans", sans-serif; color: #9a9a9a; }
.stages { display: flex; margin-left: auto; font: 13px/16px var(--noto); }
.stage { display: flex; align-items: center; justify-content: center; height: 37px; padding: 0 15px; }
.stage.on { background: repeating-linear-gradient(135deg, #fafafa 0 2px, #ececec 2px 3px); }

/* Workspace */
.workspace { display: flex; flex: 1; }
.main { flex: 1; min-width: 0; margin: 4px 0 0 3px; border-left: 1px dashed var(--soft); padding-left: 14px; }
.form { border-top: 1px dashed var(--soft); padding: 1px 0 4px; }
.headrow { display: flex; justify-content: space-between; }
.formtitle { font: bold 20px/42px "Open Sans", "Noto Sans", sans-serif; color: #000066; padding-left: 2px; height: 36px; }
.row { display: flex; gap: 3px; }
.row.tight { gap: 2px; padding-left: 1px; }
.row.gap4 { gap: 4px; }
.row.spread { justify-content: space-between; }
.right > .row, .taxes > .row { justify-content: flex-end; }
.field { display: flex; flex-direction: column; }
.field > label { line-height: 16px; height: 17px; white-space: nowrap; margin-left: -1px; }
.field.end { align-items: flex-end; }
.field.low { justify-content: flex-end; }
.field.mid { align-items: center; }
.field.mid > label { margin: 0; }
.grow { flex: 1; }
.w36 { width: 37px; } .w46 { width: 46px; } .w52f { width: 52px; } .w60f { width: 61px; } .w63 { width: 63px; }
.w67 { width: 67px; } .w69 { width: 69px; } .w78 { width: 78px; } .w84 { width: 84px; } .w86 { width: 86px; }
.w88 { width: 88px; } .w91 { width: 91px; } .w103 { width: 103px; } .w118 { width: 118px; } .w121 { width: 121px; } .w138 { width: 138px; }
.inp { display: block; width: 100%; height: 19px; padding: 0 2px; border: 1px solid var(--line); border-radius: 0; background-color: #fff; line-height: 16px; outline: 0; }
textarea.inp { resize: none; overflow: hidden; padding: 0; }
.num { text-align: right; }
.gray { background-color: #f3f3f3; }
.dark { background-color: #e1e1e1; }
.green { background-color: #c0dcc0; }
.red { background-color: #f00; }
.yellow { background-color: #ffff99; }
.cream { background-color: #ffffe1; }
.bold { font: bold 11px/16px var(--noto); }
.sel { appearance: none; padding-right: 16px; background-image: linear-gradient(-135deg, #000 50%, transparent 50%), linear-gradient(135deg, #000 50%, transparent 50%); background-size: 4px 4px; background-position: right 8px top 8px, right 4px top 8px; background-repeat: no-repeat; }
.combo { display: flex; align-items: center; gap: 4px; }
.bare { flex: 1; min-width: 0; width: 0; border: 0; padding: 0; background: none; line-height: 16px; outline: 0; }
.hint { color: #999; }
.dots { width: 12px; height: 16px; margin: 0 1px 0 3px; background: radial-gradient(circle, #000 0 1px, transparent 2px) 0 6px / 4px 4px repeat-x; }
.formtabs { display: flex; margin: 4px 0 0 5px; height: 24px; }
.formtab { height: 25px; padding: 0 8px; margin-right: -1px; border: 1px solid var(--line); }
.panel { position: relative; display: grid; grid-template-columns: minmax(0, 585fr) minmax(0, 612fr); gap: 12px; margin-right: 2px; padding: 10px 11px 9px 12px; background: #fff; border: 1px solid var(--line); box-shadow: 2px 2px 0 #fff, 3px 3px 0 var(--line); }
.memo { height: 116px; margin-top: 2px; white-space: pre-wrap; }
.checks { display: flex; gap: 6px; height: 19px; margin-top: 4px; color: #808080; }
.check { display: flex; align-items: center; gap: 6px; white-space: nowrap; height: 15px; }
.check input { appearance: none; width: 13px; height: 13px; border: 1px solid var(--line); background: #fff; }
.check.strong { flex: 1; font-weight: bold; color: #138013; }
.nferow { display: flex; justify-content: flex-end; gap: 1px; }
.nfebox { display: flex; align-items: center; justify-content: center; width: 63px; height: 71px; margin: 1px 0 0 1px; border: 1px dashed var(--soft); }
.strip { display: flex; align-items: center; justify-content: center; width: 14px; height: 71px; margin-top: 1px; border: 1px solid var(--line); }
.strip::after { content: ""; border: 4px solid transparent; border-top-color: #000; border-bottom: 0; }
.gearbtn { align-self: flex-end; padding: 0 0 1px 1px; }
.taxes { margin-top: 1px; padding-bottom: 12px; border: 1px dashed var(--soft); border-left: 0; margin-right: -1px; }
.taxes > .row { padding-right: 10px; }
.taxbar { display: flex; justify-content: flex-end; align-items: center; height: 20px; margin-bottom: 8px; padding-right: 2px; border-bottom: 1px dashed var(--soft); background: repeating-linear-gradient(135deg, #fff 0 5px, #f5f5f5 5px 6px); }
.upbtn { display: flex; align-items: center; justify-content: center; width: 16px; height: 16px; border: 1px solid var(--line); background: #fff; }
.notas { width: 100%; margin-top: 1px; border-collapse: collapse; table-layout: fixed; }
.notas th { height: 19px; padding: 0 1px; border: 1px solid var(--line); border-right-width: 0; text-align: left; font-weight: normal; line-height: 16px; }
.c12 { width: 11px; } .c115 { width: 115px; } .c79 { width: 79px; } .c60 { width: 60px; } .c85 { width: 85px; }
.c157 { width: 157px; } .c20 { width: 20px; } .c30 { width: 30px; }

.bottom { display: flex; gap: 3px; padding-top: 2px; }
.obs { flex: 1; padding-left: 1px; }
.obs textarea { height: 57px; }
.stack { display: flex; flex-direction: column; justify-content: space-between; height: 74px; }
.tall { height: 21px; }
.status { text-align: center; font: bold 11px/16px var(--wide); color: #0a7a0a; }
.anexos { display: flex; align-items: center; gap: 4px; margin: 4px 17px 0 0; }
.pct { width: 17px; height: 13px; border: 1px solid #5b7fb4; background: #cfe0f4; color: #24457c; font-size: 9px; line-height: 10px; }
.totals { display: grid; grid-template-columns: 46px 84px 69px 102px; grid-auto-rows: 32px; row-gap: 3px; align-items: center; padding-top: 7px; margin-left: 8px; }
.totals .inp { height: 32px; }
.totals .subt { font: bold 12px/16px var(--wide); text-align: center; }
.totals .ttl { font: 16px/20px var(--noto); text-align: center; }
.totals .subv { font: bold 12px/16px var(--wide); }
.totals .big { font: 16px/20px var(--wide); }

/* Side column */
.side { width: 112px; padding: 0 4px 0 8px; display: flex; flex-direction: column; font-size: 12px; }
.sbtn { display: flex; align-items: center; gap: 4px; height: 40px; padding-left: 6px; border: 1px solid var(--line); text-align: left; background: #fff; }
.menu { background: #800080; border-color: #800080; color: #fff; margin-bottom: 9px; }
.sgroup .sbtn { width: 100%; border-color: #a0a0a0; }
.novo { color: #0a7a0a; } .alt { color: #a9c7e6; }
.sgroup .exc { background: #c0c0c0; color: #b22b2b; }
.sgroup2 { margin: 16px 0 15px; }
.cons { width: 100%; color: #2f7bbf; margin-bottom: 3px; }
.pair { display: grid; grid-template-columns: 1fr 1fr; height: 40px; border: 1px solid var(--line); }
.pair button { display: flex; align-items: center; padding-left: 6px; }
.pair button + button { border-left: 1px solid var(--line); }
.impr { color: #84308a; margin-bottom: 20px; }
.fat { background: #7fcb33; border-color: #7fcb33; color: #fff; padding-left: 9px; gap: 7px; }
.sideinp { width: auto; margin: 3px -3px 0; }
.sidetools { display: flex; justify-content: space-around; align-items: center; height: 34px; margin: auto 0 7px; background: #efefef; }

/* Taskbar */
.taskbar { display: flex; height: 40px; background: #f4e0eb; }
.start { width: 51px; padding-left: 16px; }
.task { display: flex; align-items: center; justify-content: center; width: 48px; margin-right: 1px; position: relative; }
.task.run::after { content: ""; position: absolute; left: 4px; right: 4px; bottom: 0; height: 2px; background: #d9005b; }
.task.open { background: #fbf2f7; }
.task.open::after { left: 0; right: 0; }
.tray { display: flex; align-items: center; gap: 8px; margin-left: auto; }
.clock { font-size: 12px; line-height: 18px; text-align: center; margin-right: 8px; }
.peek { width: 5px; height: 40px; border-left: 1px solid #c9b5c0; margin-left: 12px; }

/* Dialog */
.dialog { position: absolute; top: 121px; left: 0; right: 0; width: 744px; margin: 0 auto; background: #fff; border: 4px solid #6e6e6e; box-shadow: 0 0 0 1px #fff; }
.dlg-bar { display: flex; align-items: center; gap: 7px; height: 21px; padding: 0 6px 2px 4px; border-bottom: 1px dashed #777; font-size: 12px; }
.dlg-bar span { flex: 1; }
.dlg-bar button { width: 12px; display: flex; justify-content: center; }
.dlg-head { display: flex; gap: 9px; padding: 10px 0 0 14px; height: 53px; color: #003a70; }
.dlg-title { font: bold 15px/16px "Noto Sans", sans-serif; color: #0b5cab; margin: -2px 0 5px; }
.dlg-sub { line-height: 16px; }
.tree { height: 365px; margin: 0 6px 0 5px; border: 1px solid var(--line); font: 13px/20px var(--ui); }
.tree-group { display: flex; align-items: center; gap: 9px; height: 20px; padding-left: 6px; color: #909090; }
.tree-group.inner { border-bottom: 1px solid var(--soft); }
.tri { border: 4px solid transparent; border-top-color: #000; border-bottom: 0; }
.tree-sub { margin-left: 20px; border: 1px solid var(--soft); border-right: 0; }
.tree-table { width: calc(100% - 20px); margin-left: 20px; border-collapse: collapse; table-layout: fixed; background: #f3f3f3; }
.tree-table td { height: 37px; padding: 0 1px; border-left: 1px solid var(--soft); }
.tree-table .lnk { background: #eeeff8; color: #2444a0; }
.lnk a { text-decoration: underline; }
.tree-table .msg { vertical-align: top; line-height: 22px; white-space: nowrap; }
.lock svg { margin: 0 auto; }
.dlg-foot { display: flex; align-items: center; gap: 2px; margin: 4px 6px 0 5px; padding: 3px 0 4px; border-top: 1px dashed var(--soft); }
.dbtn { display: flex; align-items: center; justify-content: center; gap: 5px; height: 25px; border: 1px solid var(--line); font-size: 12px; }
.gear { width: 36px; }
.dlg-count { flex: 1; margin: 8px 0 0 7px; color: #003a70; }
.wide1 { width: 138px; } .wide2 { width: 135px; }
```
